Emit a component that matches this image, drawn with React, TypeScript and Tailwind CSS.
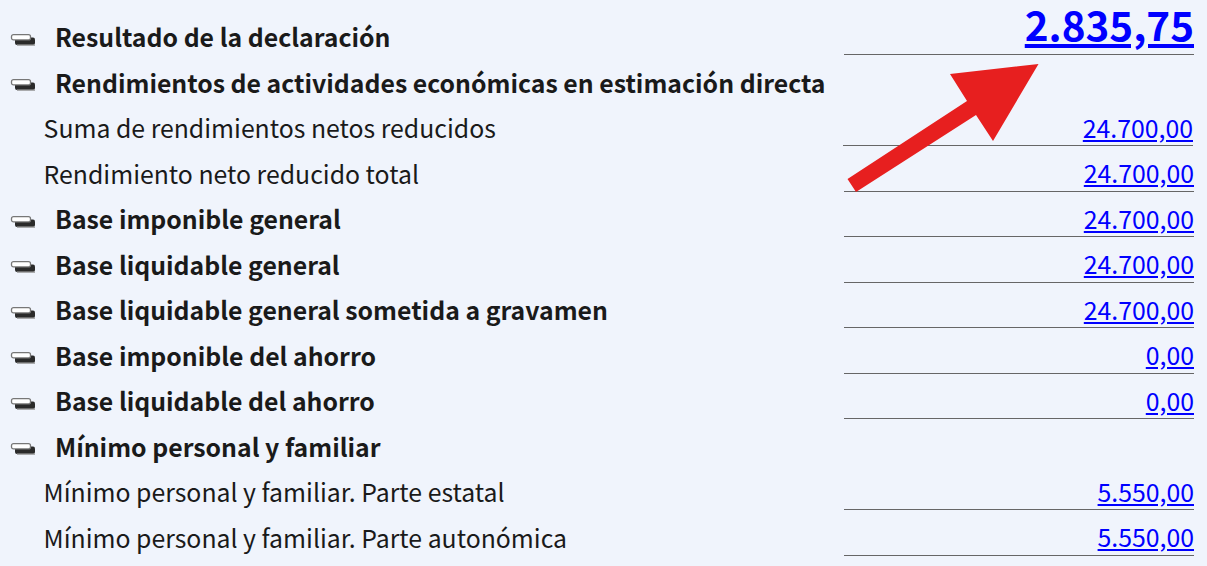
const rows: { label: string; value?: string; kind: "head" | "sub"; shift?: boolean }[] = [
  { label: "Resultado de la declaración", value: "2.835,75", kind: "head" },
  { label: "Rendimientos de actividades económicas en estimación directa", kind: "head" },
  { label: "Suma de rendimientos netos reducidos", value: "24.700,00", kind: "sub", shift: true },
  { label: "Rendimiento neto reducido total", value: "24.700,00", kind: "sub" },
  { label: "Base imponible general", value: "24.700,00", kind: "head" },
  { label: "Base liquidable general", value: "24.700,00", kind: "head" },
  { label: "Base liquidable general sometida a gravamen", value: "24.700,00", kind: "head" },
  { label: "Base imponible del ahorro", value: "0,00", kind: "head" },
  { label: "Base liquidable del ahorro", value: "0,00", kind: "head" },
  { label: "Mínimo personal y familiar", kind: "head" },
  { label: "Mínimo personal y familiar. Parte estatal", value: "5.550,00", kind: "sub" },
  { label: "Mínimo personal y familiar. Parte autonómica", value: "5.550,00", kind: "sub" },
];

function Bullet() {
  return (
    <svg width="26" height="12" viewBox="0 0 26 12" className="mt-[6px] shrink-0">
      <rect x="5" y="3.5" width="20" height="7.5" rx="2" fill="#2a2a2a" />
      <rect x="7" y="10.4" width="18" height="1.4" fill="#999" />
      <rect x="1.5" y="0.7" width="19" height="5.2" rx="2" fill="#fff" stroke="#777" strokeWidth="1.3" />
    </svg>
  );
}

export default function App() {
  return (
    <div className="relative h-[566px] w-[1207px] overflow-hidden bg-[#f0f4fc] pt-[9.5px] font-['Noto_Sans_CJK_SC','Noto_Sans',sans-serif] text-[24.82px] text-[#1a1a1a]">
      {rows.map((r, i) => (
        <div key={i} className="flex h-[45.5px] items-center justify-between pr-[13px]">
          {r.kind === "head" ? (
            <div className="flex items-center pl-[10px] pt-[9.2px]">
              <Bullet />
              <span className="ml-[19px] whitespace-nowrap font-bold">{r.label}</span>
            </div>
          ) : (
            <span className="pl-[43.6px] pt-[9.2px] whitespace-nowrap">{r.label}</span>
          )}
          {r.value && (
            <div
              className={
                "h-full w-[350px] border-b border-[#666] text-right " +
                (i === 0 ? "leading-[28px] " : "leading-[53.9px] ") +
                (r.shift ? "relative right-px" : "")
              }
            >
              <a href="#" className={"text-[#0000ff] underline " + (i === 0 ? "text-[40.4px] font-bold" : "")}>
                {r.value}
              </a>
            </div>
          )}
        </div>
      ))}
      <svg className="absolute left-0 top-0" width="1207" height="566" viewBox="0 0 1207 566">
        <polygon
          points="1038.5,64 950,74 967,101 847.5,179 856,192 976,115 993,141"
          fill="#e71f1f"
        />
      </svg>
    </div>
  );
}
